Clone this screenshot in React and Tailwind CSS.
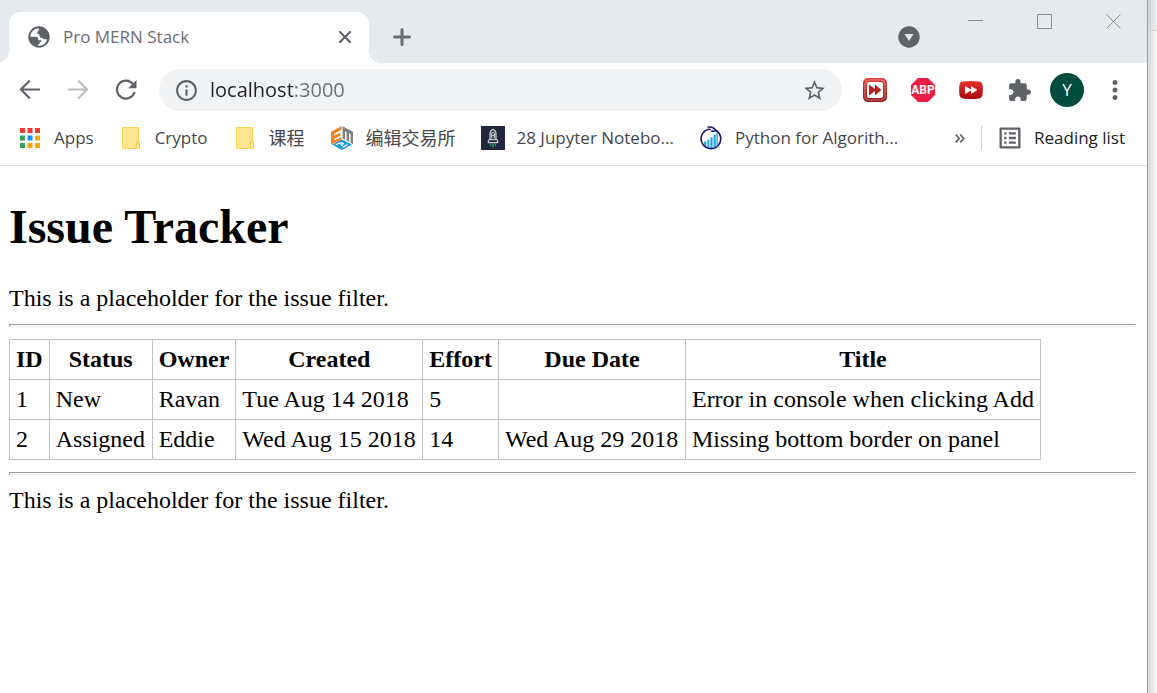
import React from "react";
import {
  MdInfoOutline,
  MdStarBorder,
  MdExtension,
  MdMoreVert,
  MdListAlt,
} from "react-icons/md";

const issues = [
  { id: 1, status: "New", owner: "Ravan", created: "Tue Aug 14 2018", effort: 5, due: "", title: "Error in console when clicking Add" },
  { id: 2, status: "Assigned", owner: "Eddie", created: "Wed Aug 15 2018", effort: 14, due: "Wed Aug 29 2018", title: "Missing bottom border on panel" },
];

function GlobeIcon() {
  return (
    <svg width="22" height="22" viewBox="0 0 22 22" aria-hidden="true">
      <circle cx="11" cy="11" r="9.7" fill="#fff" stroke="#5f6368" strokeWidth="2" />
      <path
        d="M11.6 1.4Q10.2 3.4 10.6 5 8.6 5.8 9.4 7.6 11.6 7.8 11.8 10.2 12.4 12.4 14.4 11.8 15.6 13.8 18 13.2L20.6 13.6A10 10 0 0 0 11.6 1.4Z"
        fill="#5f6368"
      />
      <path
        d="M1.6 10.8H7.4Q10.6 11 10.4 14.2H13.4Q14 16.2 11.8 16.6 11.8 18.6 10 18.8L9.6 20.4A10 10 0 0 1 1.6 10.8Z"
        fill="#5f6368"
      />
      <path d="M4 13.4Q6.6 13.4 6.8 15.4 8.6 15.8 8.2 18.4 4.6 17 4 13.4Z" fill="#5f6368" />
    </svg>
  );
}

function ArrowIcon({ flipped, color }) {
  return (
    <svg width="22" height="22" viewBox="0 0 22 22" fill="none" stroke={color} strokeWidth="2.2" aria-hidden="true">
      {flipped ? <path d="M1 10.5H20M11.2 1.5l8.8 9-8.8 9" /> : <path d="M21 10.5H2M10.8 1.5l-8.8 9 8.8 9" />}
    </svg>
  );
}

function ReloadIcon() {
  return (
    <svg width="22" height="22" viewBox="0 0 22 22" aria-hidden="true">
      <path d="M18.2 5.2A9 9 0 1 0 19.6 13" fill="none" stroke="#5f6368" strokeWidth="2.2" />
      <path d="M21.5 1v8.2h-8.2z" fill="#5f6368" />
    </svg>
  );
}

function AppsIcon() {
  const colors = ["#f23b36", "#f23b36", "#f23b36", "#34a05a", "#1a8cff", "#f9a60c", "#34a05a", "#f9a60c", "#f9a60c"];
  return (
    <svg width="20" height="20" viewBox="0 0 20 20" aria-hidden="true">
      {colors.map((c, i) => (
        <rect key={i} x={(i % 3) * 7.5} y={Math.floor(i / 3) * 7.5} width="5" height="5" fill={c} />
      ))}
    </svg>
  );
}

function FolderIcon() {
  return (
    <svg width="18" height="22" viewBox="0 0 18 22" aria-hidden="true">
      <path d="M.5.5h16v14.2l1 .8v6H.5z" fill="#ffe591" stroke="#f6d355" />
      <path d="M14.2 21v-4.8q0-1.4 1.6-1.4t1.7 1.4V21" fill="#ffe591" stroke="#edc63f" />
    </svg>
  );
}

function CubeIcon() {
  return (
    <svg width="22" height="24" viewBox="0 0 22 24" aria-hidden="true">
      <path d="M0 5.8 10.6.2v3.6L3.4 7.6v2l6-3v3.2l-6 3v1.8l7-3.6v3L0 18.4z" fill="#f5821f" />
      <path d="M11.6.2 22 5.8V18l-2.4-1.3V8.2L18 7.4v8.4l-2.4-1.3V6.2L14 5.4v8.3l-2.4-1.2z" fill="#808184" />
      <path d="m11 13.4 9.8 5.2L11 24l-9.8-5.4z" fill="#159be0" />
      <path d="m5 18.8 4-2 3.4 4.2 4-2.4M10.4 16.2l2.4 2" stroke="#fff" strokeWidth="1.2" fill="none" />
    </svg>
  );
}

function RocketIcon() {
  return (
    <svg width="24" height="24" viewBox="0 0 24 24" aria-hidden="true">
      <path d="M0 0h24v24H0z" fill="#20273b" />
      <path d="M9 14V7.5Q9.4 4.2 12 3.4q2.6.8 3 4.1V14M9 12.5 7.4 15v1.6h9.2V15L15 12.5M9.4 13.5h5.2M10.6 7.5V12M13.4 7.5V12" fill="none" stroke="#c4c7cc" strokeWidth="1.3" />
      <circle cx="12" cy="8" r="1.6" fill="none" stroke="#c4c7cc" strokeWidth=".9" />
      <path d="M9.6 17.4v2.4M12 17.4v3.8M14.4 17.4v2.4" stroke="#2f9c83" strokeWidth="1.4" />
    </svg>
  );
}

function ChartIcon() {
  return (
    <svg width="22" height="24" viewBox="0 0 22 24" aria-hidden="true">
      <path d="M4 19v-3.4h2.2v5M7.2 21.4v-7.6h2.2V22M10.4 22.2V11.2h2.2v11M13.6 21.8V8.6h2.2V21M16.4 20V6.4h1.4V18" fill="#29a8e0" />
      <path d="M6.6 4A9.8 9.8 0 1 0 15.6 4.2" fill="none" stroke="#14146e" strokeWidth="1.6" />
      <path d="M6.6 4Q8.6 2.8 10.6 3.4M7.6 1.2q3.4-.8 6 1 1.6 1 2 2.4-2 1.2-4.4.2" fill="none" stroke="#14146e" strokeWidth="1.6" />
    </svg>
  );
}

function FastForwardFrameIcon() {
  return (
    <svg width="24" height="24" viewBox="0 0 24 24" aria-hidden="true">
      <defs>
        <linearGradient id="frame" x1="0" y1="0" x2="0" y2="1">
          <stop offset="0" stopColor="#dd4037" />
          <stop offset="1" stopColor="#8f1716" />
        </linearGradient>
      </defs>
      <rect width="24" height="24" rx="5" fill="url(#frame)" />
      <rect x="2" y="2" width="20" height="20" rx="3.6" fill="none" stroke="#fff" strokeWidth=".7" opacity=".55" />
      <rect x="4" y="4" width="16" height="16" rx="2" fill="#fff" />
      <path d="M6 6.4 12 11V6.4l6.4 5.6-6.4 5.6V13l-6 4.6z" fill="#b5211e" />
    </svg>
  );
}

function AdblockIcon() {
  return (
    <svg width="24" height="24" viewBox="0 0 24 24" aria-hidden="true">
      <path d="M7 0h10l7 7v10l-7 7H7l-7-7V7z" fill="#ed1e45" />
      <text x="12" y="16.4" textAnchor="middle" fontFamily="Roboto, sans-serif" fontWeight="700" fontSize="12" fill="#fff">
        ABP
      </text>
    </svg>
  );
}

function FastForwardIcon() {
  return (
    <svg width="24" height="18" viewBox="0 0 24 18" aria-hidden="true">
      <defs>
        <linearGradient id="pill" x1="0" y1="0" x2="0" y2="1">
          <stop offset="0" stopColor="#e8312c" />
          <stop offset="1" stopColor="#a8080e" />
        </linearGradient>
      </defs>
      <path d="M4 .6Q12-.5 20 .6 23 1 23.5 4q.8 5 0 10-.5 3-3.5 3.4-8 1.1-16 0Q1 17 .5 14q-.8-5 0-10Q1 1 4 .6Z" fill="url(#pill)" />
      <path d="M6 5v8l6-3.4V13l6.4-4L12 5v3.4z" fill="#fff" />
    </svg>
  );
}

function ToolButton({ label, children }) {
  return (
    <button aria-label={label} className="flex h-10 w-12 shrink-0 items-center justify-center text-[#5f6368]">
      {children}
    </button>
  );
}

function Bookmark({ icon, children }) {
  return (
    <a href="#" className="flex shrink-0 items-center gap-3">
      <span className="flex w-6 justify-center">{icon}</span>
      {children}
    </a>
  );
}

function TabStrip() {
  return (
    <div className="flex h-[63px] bg-[#e6eaec]">
      <div className="relative mt-3 ml-[9px] flex w-[360px] shrink-0 items-center rounded-t-xl bg-white pr-4 pb-0.5 pl-[19px]">
        <span className="absolute bottom-0 -left-3 size-3 bg-[radial-gradient(circle_at_top_left,transparent_12px,white_12px)]" />
        <span className="absolute -right-3 bottom-0 size-3 bg-[radial-gradient(circle_at_top_right,transparent_12px,white_12px)]" />
        <GlobeIcon />
        <span className="ml-[13px] flex-1 text-[17px] text-[#6b6e72]">Pro MERN Stack</span>
        <button aria-label="Close tab" className="p-0.5">
          <svg width="12" height="12" viewBox="0 0 12 12" stroke="#5f6368" strokeWidth="2.2" strokeLinecap="round">
            <path d="m1 1 10 10M11 1 1 11" />
          </svg>
        </button>
      </div>
      <button aria-label="New tab" className="mt-3 ml-6 flex h-[50px] items-center">
        <svg width="18" height="18" viewBox="0 0 18 18" stroke="#6a6d70" strokeWidth="3" strokeLinecap="round">
          <path d="M9 1.5v15M1.5 9h15" />
        </svg>
      </button>
      <button aria-label="Search tabs" className="mt-3 mr-5 ml-auto flex h-[50px] items-center">
        <svg width="22" height="22" viewBox="0 0 22 22">
          <circle cx="11" cy="11" r="10.7" fill="#5f6368" />
          <path d="M6.4 8h9.2L11 15z" fill="#e6eaec" />
        </svg>
      </button>
      <div className="flex h-[42px]">
        {[
          ["Minimize", "M0 6.5h15"],
          ["Maximize", "M.5.5h14v14H.5z"],
          ["Close", "m.5.5 14 14M14.5.5l-14 14"],
        ].map(([label, d]) => (
          <button key={label} aria-label={label} className="flex w-[69px] items-center justify-center pl-0.5">
            <svg width="15" height="15" viewBox="0 0 15 15" fill="none" stroke="#8a8d8f">
              <path d={d} />
            </svg>
          </button>
        ))}
      </div>
    </div>
  );
}

function Toolbar() {
  return (
    <div className="flex h-[54px] items-center pr-2 pl-1.5">
      <ToolButton label="Back"><ArrowIcon color="#5f6368" /></ToolButton>
      <ToolButton label="Forward"><ArrowIcon flipped color="#bcbdbf" /></ToolButton>
      <ToolButton label="Reload"><ReloadIcon /></ToolButton>
      <div className="mx-[9px] flex h-[42px] min-w-0 flex-1 items-center rounded-full bg-[#f1f3f4] px-[15px] text-[#5f6368]">
        <MdInfoOutline size={25} className="shrink-0" />
        <input
          aria-label="Address"
          defaultValue="localhost:3000"
          className="ml-[11px] min-w-0 flex-1 bg-[linear-gradient(to_right,#202124_84px,#6b6e72_84px)] bg-clip-text text-[20px] text-transparent outline-none"
        />
        <button aria-label="Bookmark this page"><MdStarBorder size={25} /></button>
      </div>
      <ToolButton label="Video speed"><FastForwardFrameIcon /></ToolButton>
      <ToolButton label="Adblock Plus"><AdblockIcon /></ToolButton>
      <ToolButton label="Skip ads"><FastForwardIcon /></ToolButton>
      <ToolButton label="Extensions"><MdExtension size={25} /></ToolButton>
      <ToolButton label="Profile">
        <span className="flex size-[34px] items-center justify-center rounded-full bg-[#004d40] text-[17px] text-white">Y</span>
      </ToolButton>
      <ToolButton label="Menu"><MdMoreVert size={30} /></ToolButton>
    </div>
  );
}

function BookmarksBar() {
  return (
    <nav className="flex h-[49px] items-center border-b border-[#dadce0] pr-[22px] pb-1.5 pl-[18px] text-[17px] text-[#45484c]">
      <div className="flex items-center gap-[25px]">
        <Bookmark icon={<AppsIcon />}>Apps</Bookmark>
        <Bookmark icon={<FolderIcon />}>Crypto</Bookmark>
        <Bookmark icon={<FolderIcon />}><span className="text-[18px]">课程</span></Bookmark>
        <Bookmark icon={<CubeIcon />}><span className="text-[18px]">编辑交易所</span></Bookmark>
        <Bookmark icon={<RocketIcon />}>28 Jupyter Notebo...</Bookmark>
        <Bookmark icon={<ChartIcon />}>Python for Algorith...</Bookmark>
      </div>
      <button aria-label="More bookmarks" className="mr-4 ml-auto">
        <svg width="10" height="9" viewBox="0 0 10 9" fill="none" stroke="#5f6368" strokeWidth="1.7">
          <path d="m.6.6 3.6 3.9L.6 8.4M5.2.6l3.6 3.9-3.6 3.9" />
        </svg>
      </button>
      <button className="flex h-6 shrink-0 items-center gap-2.5 border-l border-[#cfd1d4] pl-3.5 text-[#202124]">
        <MdListAlt size={28} className="text-[#5f6368]" />
        Reading list
      </button>
    </nav>
  );
}

function Divider() {
  return <hr className="h-[3px] border border-t-[#9a9a9a] border-r-[#eeeeee] border-b-[#eeeeee] border-l-[#9a9a9a]" />;
}

function IssueTracker() {
  const heads = ["ID", "Status", "Owner", "Created", "Effort", "Due Date", "Title"];
  const cell = "border border-[#c0c0c0] p-1.5 leading-[27px]";
  return (
    <main className="flex-1 pt-[33px] pr-[11px] pl-[9px] font-['Liberation_Serif',serif] text-[24px] leading-[27px] text-black">
      <h1 className="text-[48px] leading-[56px] font-bold">Issue Tracker</h1>
      <p className="mt-[30px] mb-3">This is a placeholder for the issue filter.</p>
      <Divider />
      <table className="my-3 border-collapse">
        <colgroup>
          <col />
          <col className="w-[103px]" />
          <col />
          <col className="w-[187px]" />
          <col />
          <col className="w-[187px]" />
          <col />
        </colgroup>
        <thead>
          <tr>{heads.map((h) => <th key={h} className={cell}>{h}</th>)}</tr>
        </thead>
        <tbody>
          {issues.map((i) => (
            <tr key={i.id}>
              {[i.id, i.status, i.owner, i.created, i.effort, i.due, i.title].map((v, n) => (
                <td key={n} className={cell}>{v}</td>
              ))}
            </tr>
          ))}
        </tbody>
      </table>
      <Divider />
      <p className="mt-3">This is a placeholder for the issue filter.</p>
    </main>
  );
}

export default function App() {
  return (
    <div className="flex min-h-screen bg-white font-['Open_Sans','Noto_Sans_CJK_SC',sans-serif]">
      <div className="flex min-w-0 flex-1 flex-col">
        <TabStrip />
        <Toolbar />
        <BookmarksBar />
        <IssueTracker />
      </div>
      <div className="flex w-2.5 shrink-0 flex-col border-l border-[#a0a0a0] bg-linear-to-r from-[#d6d6d6] to-[#fafafa]">
        <div className="h-[31px] border-b border-[#d5d7d9] bg-linear-to-r from-[#cfd0d1] to-[#f0f1f2]" />
      </div>
    </div>
  );
}
